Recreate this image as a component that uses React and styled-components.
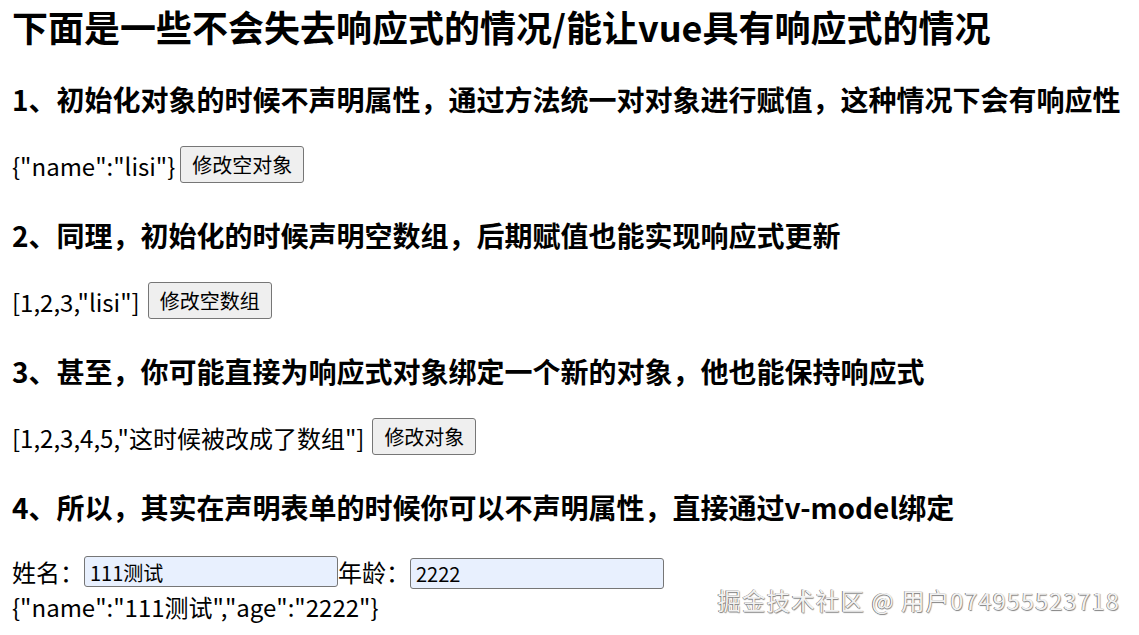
import React from "react";
import styled, { createGlobalStyle } from "styled-components";

const GlobalStyle = createGlobalStyle`
  html, body {
    margin: 0;
    padding: 0;
    background: #ffffff;
  }
  body {
    font-family: "Noto Sans CJK SC", "Noto Sans", sans-serif;
    font-size: 24px;
    color: #000000;
  }
`;

const Page = styled.div`
  position: relative;
  padding: 0 12px;
  min-height: 635px;
  box-sizing: border-box;
`;

const Title = styled.h2`
  margin: 0 0 27px;
  font-size: 36px;
  line-height: 52px;
  font-weight: 700;
  white-space: nowrap;
`;

const Section = styled.section`
  margin: 0 0 32px;
`;

const Heading = styled.h3`
  margin: 0 0 27px;
  font-size: 28px;
  line-height: 40px;
  font-weight: 700;
  white-space: nowrap;
`;

const Row = styled.div`
  display: flex;
  align-items: center;
  height: 37px;
  white-space: pre;
`;

const Value = styled.span`
  font-size: 24px;
  line-height: 36px;
  padding-top: 2px;
  padding-right: ${(p) => (p.$wide ? "3px" : "0")};
`;

const Button = styled.button`
  font-family: "Noto Sans CJK SC", sans-serif;
  font-size: 20px;
  line-height: 29px;
  padding: 3px 11px;
  margin-left: 5px;
  color: #000;
  background: #efefef;
  border: 1px solid #767676;
  border-radius: 3px;
  box-sizing: border-box;
  height: 37px;
`;

const FormRow = styled.div`
  display: flex;
  align-items: center;
  height: 35px;
  margin-top: 1px;
`;

const Label = styled.span`
  font-size: 24px;
  line-height: 35px;
`;

const Input = styled.input`
  box-sizing: border-box;
  width: 254px;
  height: 31px;
  padding: 1px 5px 0;
  font-family: "Noto Sans CJK SC", sans-serif;
  font-size: 20px;
  color: #000;
  background: #e8f0fe;
  border: 1px solid #767676;
  border-radius: 3px;
  outline: none;
  margin-top: ${(p) => (p.$shift ? "3px" : "0")};
`;

const JsonLine = styled.div`
  font-size: 24px;
  line-height: 36px;
`;

const Watermark = styled.div`
  position: absolute;
  right: 19px;
  top: 583px;
  font-family: "Noto Sans CJK SC", sans-serif;
  font-size: 23.5px;
  letter-spacing: 1.1px;
  line-height: 34px;
  color: #f2f2f2;
  text-shadow: -0.6px 0 0.4px #6a6a6a, 0.6px 1px 1px #808080;
  white-space: pre;
  pointer-events: none;
`;

const sections = [
  {
    title: "1、初始化对象的时候不声明属性，通过方法统一对对象进行赋值，这种情况下会有响应性",
    value: '{"name":"lisi"}',
    button: "修改空对象",
  },
  {
    title: "2、同理，初始化的时候声明空数组，后期赋值也能实现响应式更新",
    value: '[1,2,3,"lisi"]',
    button: "修改空数组",
    wide: true,
  },
  {
    title: "3、甚至，你可能直接为响应式对象绑定一个新的对象，他也能保持响应式",
    value: '[1,2,3,4,5,"这时候被改成了数组"]',
    button: "修改对象",
    wide: true,
  },
];

export default function App() {
  return (
    <>
      <GlobalStyle />
      <Page>
        <Title>下面是一些不会失去响应式的情况/能让vue具有响应式的情况</Title>
        {sections.map((s) => (
          <Section key={s.button}>
            <Heading>{s.title}</Heading>
            <Row>
              <Value $wide={s.wide}>{s.value}</Value>
              <Button>{s.button}</Button>
            </Row>
          </Section>
        ))}
        <Heading>4、所以，其实在声明表单的时候你可以不声明属性，直接通过v-model绑定</Heading>
        <FormRow>
          <Label>姓名：</Label>
          <Input defaultValue="111测试" />
          <Label>年龄：</Label>
          <Input $shift defaultValue="2222" />
        </FormRow>
        <JsonLine>{'{"name":"111测试","age":"2222"}'}</JsonLine>
        <Watermark>掘金技术社区 @ 用户074955523718</Watermark>
      </Page>
    </>
  );
}
